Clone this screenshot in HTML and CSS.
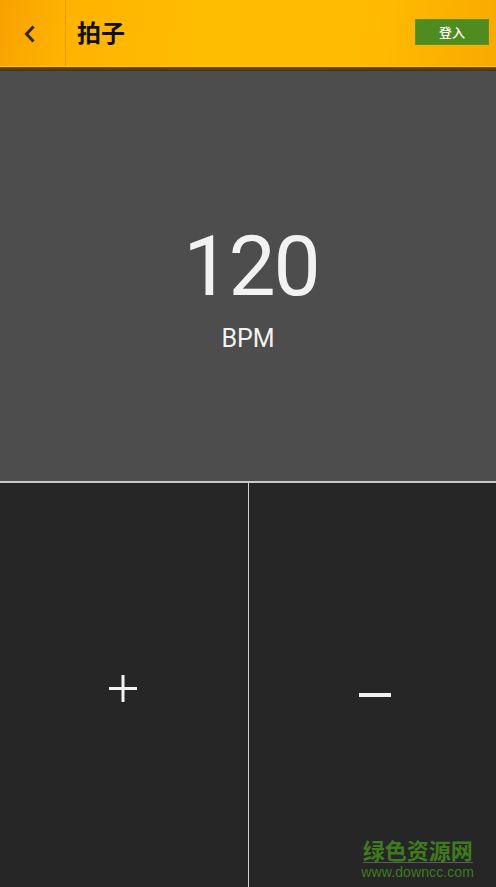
FILE: index.html
```html
<!DOCTYPE html>
<html lang="zh">
<head>
<meta charset="utf-8">
<title>拍子</title>
<link rel="stylesheet" href="styles.css">
</head>
<body>
<div class="app">
  <header class="topbar">
    <button class="back" aria-label="返回">
      <svg width="14" height="20" viewBox="0 0 14 20"><path d="M10.5 2.5 L3.5 10 L10.5 17.5" fill="none" stroke="#2e2a22" stroke-width="3" stroke-linejoin="miter"/></svg>
    </button>
    <h1 class="title">拍子</h1>
    <button class="login">登入</button>
  </header>
  <div class="shade"></div>
  <section class="display">
    <div class="bpm-value">120</div>
    <div class="bpm-unit">BPM</div>
  </section>
  <section class="controls">
    <button class="ctl" aria-label="加">
      <svg width="30" height="30" viewBox="0 0 30 30"><rect x="13.5" y="1" width="3" height="27" fill="#f2f2f2"/><rect x="1" y="13" width="28" height="3" fill="#f2f2f2"/></svg>
    </button>
    <button class="ctl minus" aria-label="减">
      <svg width="34" height="6" viewBox="0 0 34 6"><rect x="1" y="1" width="32" height="4" fill="#f2f2f2"/></svg>
    </button>
    <div class="watermark">
      <div class="wm-cn">绿色资源网</div>
      <div class="wm-en">www.downcc.com</div>
    </div>
  </section>
</div>
</body>
</html>
```

FILE: styles.css
```css
* { box-sizing: border-box; }
html, body { margin: 0; padding: 0; }
body {
  width: 496px;
  height: 887px;
  overflow: hidden;
  background: #262626;
  font-family: Roboto, "Noto Sans CJK SC", sans-serif;
}
.app {
  display: flex;
  flex-direction: column;
  height: 887px;
}
.topbar {
  height: 67px;
  display: flex;
  align-items: center;
  background: linear-gradient(100deg, #f8a100 0%, #ffb300 14%, #ffbd00 40%, #ffbb00 75%, #f9a900 100%);
  border-bottom: 1px solid #ffc21a;
}
.back {
  width: 66px;
  height: 66px;
  flex: 0 0 66px;
  border: 0;
  border-right: 1px solid #e39c00;
  background: transparent;
  padding: 0 0 0 18px;
  display: flex;
  align-items: center;
  justify-content: flex-start;
}
.back svg { display: block; margin-left: 5px; margin-top: 2px; }
.title {
  margin: 0 0 0 11px;
  font-family: "Noto Sans CJK SC", sans-serif;
  font-weight: 700;
  font-size: 24px;
  color: #111;
  flex: 1;
  line-height: 1;
  margin-top: -2px;
}
.login {
  width: 74px;
  height: 26px;
  margin: 0 7px 0 0;
  margin-top: -2px;
  background: #4e8c20;
  border: 1px solid #5a9426;
  color: #fff;
  font-family: "Noto Sans CJK SC", sans-serif;
  font-size: 13px;
  font-weight: 500;
  padding: 0;
  line-height: 24px;
}
.shade {
  height: 4px;
  background: linear-gradient(#7a5000, #3d3322);
}
.display {
  height: 412px;
  background: #4d4d4d;
  border-bottom: 2px solid #c9c9c9;
  display: flex;
  flex-direction: column;
  align-items: center;
  color: #f2f2f2;
}
.bpm-value {
  margin-top: 154px;
  font-size: 84px;
  font-weight: 400;
  line-height: 1;
  letter-spacing: -2px;
  padding-left: 6px;
}
.bpm-unit {
  margin-top: 17px;
  font-size: 25px;
  line-height: 1;
}
.controls {
  flex: 1;
  display: grid;
  grid-template-columns: 248px 1px 1fr;
  position: relative;
}
.controls::before {
  content: "";
  grid-column: 2;
  grid-row: 1;
  background: #d0d0d0;
}
.ctl {
  border: 0;
  background: #262626;
  padding: 0;
  display: flex;
  align-items: center;
  justify-content: center;
  grid-row: 1;
}
.ctl:first-child { grid-column: 1; }
.ctl svg { display: block; margin-top: 8px; margin-left: -3px; }
.ctl.minus { grid-column: 3; }
.ctl.minus svg { margin-top: 19px; margin-left: 4px; }
.watermark {
  position: absolute;
  right: 22px;
  bottom: 8px;
  display: flex;
  flex-direction: column;
  align-items: center;
  color: #3f7a1f;
}
.wm-cn {
  font-family: "Noto Sans CJK SC", sans-serif;
  font-weight: 700;
  font-size: 22px;
  line-height: 22px;
  border-bottom: 1px solid #5a5f55;
  padding-bottom: 2px;
}
.wm-en {
  margin-top: 2px;
  font-family: "Liberation Sans", sans-serif;
  font-size: 14px;
  line-height: 14px;
  letter-spacing: 0.1px;
}
```
